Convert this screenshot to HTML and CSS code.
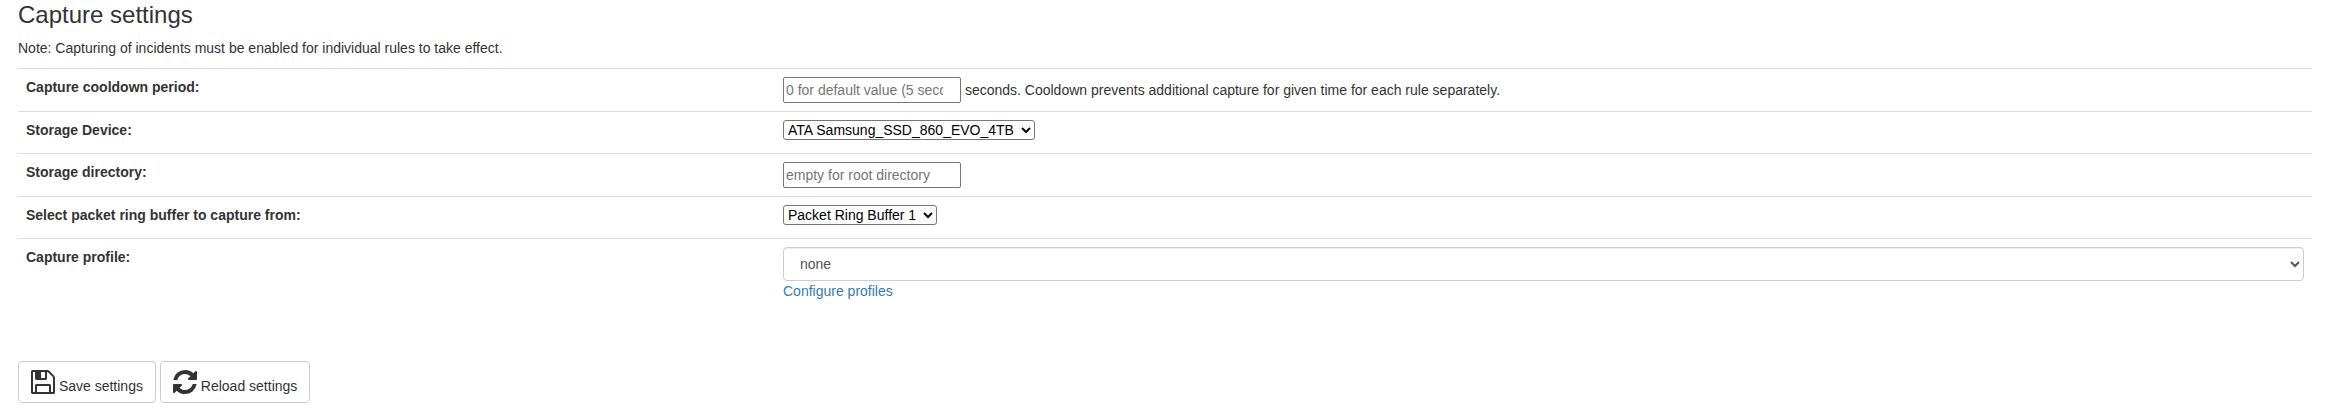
FILE: index.html
```html
<!DOCTYPE html>
<html lang="en">
<head>
    <meta charset="UTF-8">
    <title>Capture settings</title>
    <link rel="stylesheet" href="styles.css">
</head>
<body>
    <h3>Capture settings</h3>
    <p class="note">Note: Capturing of incidents must be enabled for individual rules to take effect.</p>
    <table class="settings">
        <tr>
            <th>Capture cooldown period:</th>
            <td><input type="number" class="small-input" placeholder="0 for default value (5 seconds)"> seconds. Cooldown prevents additional capture for given time for each rule separately.</td>
        </tr>
        <tr>
            <th>Storage Device:</th>
            <td><select class="plain-select"><option>ATA Samsung_SSD_860_EVO_4TB</option></select></td>
        </tr>
        <tr>
            <th>Storage directory:</th>
            <td><input type="text" class="small-input" placeholder="empty for root directory"></td>
        </tr>
        <tr>
            <th>Select packet ring buffer to capture from:</th>
            <td><select class="plain-select"><option>Packet Ring Buffer 1</option></select></td>
        </tr>
        <tr>
            <th>Capture profile:</th>
            <td>
                <select class="form-select"><option>none</option></select>
                <a href="#" class="profiles-link">Configure profiles</a>
            </td>
        </tr>
    </table>
    <div class="buttons">
        <button class="btn">
            <svg class="icon" viewBox="128 0 1536 1792"><path d="M512 1536h768v-384h-768v384zm896 0h128v-896q0-14-10-38.500t-20-34.500l-281-281q-10-10-34-20t-39-10v416q0 40-28 68t-68 28h-576q-40 0-68-28t-28-68v-416h-128v1280h128v-416q0-40 28-68t68-28h832q40 0 68 28t28 68v416zm-384-928v-320q0-13-9.500-22.500t-22.500-9.500h-192q-13 0-22.500 9.500t-9.500 22.500v320q0 13 9.500 22.500t22.500 9.500h192q13 0 22.500-9.500t9.500-22.500zm640 32v928q0 40-28 68t-68 28h-1344q-40 0-68-28t-28-68v-1344q0-40 28-68t68-28h928q40 0 88 20t76 48l280 280q28 28 48 76t20 88z"/></svg>
            Save settings
        </button>
        <button class="btn">
            <svg class="icon" viewBox="128 0 1536 1792"><path d="M1639 1056q0 5-1 7-64 268-268 434.500t-478 166.500q-146 0-282.500-55t-243.500-157l-129 129q-19 19-45 19t-45-19-19-45v-448q0-26 19-45t45-19h448q26 0 45 19t19 45-19 45l-137 137q71 66 161 102t187 36q134 0 250-65t186-179q11-17 53-117 8-23 30-23h192q13 0 22.500 9.500t9.500 22.500zm25-800v448q0 26-19 45t-45 19h-448q-26 0-45-19t-19-45 19-45l138-138q-148-137-349-137-134 0-250 65t-186 179q-11 17-53 117-8 23-30 23h-199q-13 0-22.500-9.500t-9.500-22.500v-7q65-268 270-434.500t480-166.500q146 0 284 55.500t245 156.500l130-129q19-19 45-19t45 19 19 45z"/></svg>
            Reload settings
        </button>
    </div>
</body>
</html>
```

FILE: styles.css
```css
body {
    margin: 0;
    padding: 0 16px 0 18px;
    font-family: "Liberation Sans", Arial, sans-serif;
    font-size: 14px;
    line-height: 20px;
    color: #333;
    background-color: #fff;
}

h3 {
    margin: 0;
    padding-top: 2px;
    font-size: 24px;
    font-weight: 500;
    line-height: 26px;
}

.note {
    margin: 10px 0 10px;
}

.settings {
    width: 100%;
    border-collapse: collapse;
}

.settings th,
.settings td {
    padding: 8px;
    border-top: 1px solid #ddd;
    vertical-align: top;
    text-align: left;
}

.settings th {
    width: 741px;
}

.small-input {
    width: 178px;
    height: 26px;
    box-sizing: border-box;
    padding: 1px 2px;
    border: 1px solid #767676;
    border-radius: 2px;
    font-family: inherit;
    font-size: 14px;
}

.plain-select {
    display: block;
    height: 20px;
    margin-bottom: 5px;
    padding-right: 3px;
    font-family: inherit;
    font-size: 14px;
    color: #000;
    background-color: #fff;
    border: 1px solid #767676;
    border-radius: 3px;
}

.form-select {
    display: block;
    width: 100%;
    height: 34px;
    padding: 6px 12px;
    font-family: inherit;
    font-size: 14px;
    color: #555;
    background-color: #fff;
    border: 1px solid #ccc;
    border-radius: 4px;
    box-shadow: inset 0 1px 1px rgba(0, 0, 0, .075);
}

.profiles-link {
    color: #337ab7;
    text-decoration: none;
}

.buttons {
    display: flex;
    gap: 4px;
    margin-top: 52px;
}

.btn {
    height: 42px;
    box-sizing: border-box;
    padding: 0 12px;
    font-family: inherit;
    font-size: 14px;
    line-height: 20px;
    color: #333;
    background-color: #fff;
    border: 1px solid #ccc;
    border-radius: 4px;
}

.icon {
    width: 24px;
    height: 28px;
    fill: #333;
    vertical-align: -5px;
}
```
